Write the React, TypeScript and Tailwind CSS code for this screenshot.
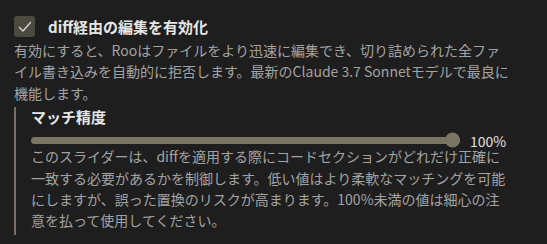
export default function App() {
  return (
    <div
      className="w-[547px] h-[244px] overflow-hidden bg-[#1e1e1e] pl-[14px] pt-[16px]"
      style={{ fontFamily: '"Noto Sans CJK JP", "Noto Sans", sans-serif' }}
    >
      <div className="flex items-center h-[21px]">
        <div className="w-[21px] h-[21px] rounded-[3px] bg-[#4a4a3f] flex items-center justify-center">
          <svg width="16" height="16" viewBox="0 0 16 16" fill="none">
            <path d="M2.5 8.5 L6 12 L13.5 3.5" stroke="#d8d8d8" strokeWidth="1.3" strokeLinecap="round" strokeLinejoin="round" />
          </svg>
        </div>
        <span className="ml-[13px] text-[15px] leading-[20px] font-bold text-[#e6e6e6]">
          diff経由の編集を有効化
        </span>
      </div>

      <p className="mt-[3px] text-[14px] leading-[21.4px] text-[#a3a3a3] whitespace-nowrap">
        有効にすると、Rooはファイルをより迅速に編集でき、切り詰められた全ファ
        <br />
        イル書き込みを自動的に拒否します。最新のClaude 3.7 Sonnetモデルで最良に
        <br />
        機能します。
      </p>

      <div className="mt-[3px] border-l-2 border-[#766f5e] pl-[15px] pb-[4px]">
        <div className="text-[15px] leading-[20px] font-bold text-[#e6e6e6]">マッチ精度</div>

        <div className="mt-[7px] flex items-center h-[12px]">
          <div className="relative w-[429px] h-[7px] rounded-full bg-[#7a7462]">
            <div className="absolute right-0 top-1/2 -translate-y-1/2 w-[15px] h-[15px] rounded-full bg-[#7a7462]" />
          </div>
          <span className="ml-[10px] mt-[2px] text-[14px] leading-[12px] text-[#e0e0e0]">100%</span>
        </div>

        <p className="text-[14px] leading-[21.3px] text-[#a3a3a3] whitespace-nowrap">
          このスライダーは、diffを適用する際にコードセクションがどれだけ正確に
          <br />
          一致する必要があるかを制御します。低い値はより柔軟なマッチングを可能
          <br />
          にしますが、誤った置換のリスクが高まります。100%未満の値は細心の注
          <br />
          意を払って使用してください。
        </p>
      </div>
    </div>
  );
}
